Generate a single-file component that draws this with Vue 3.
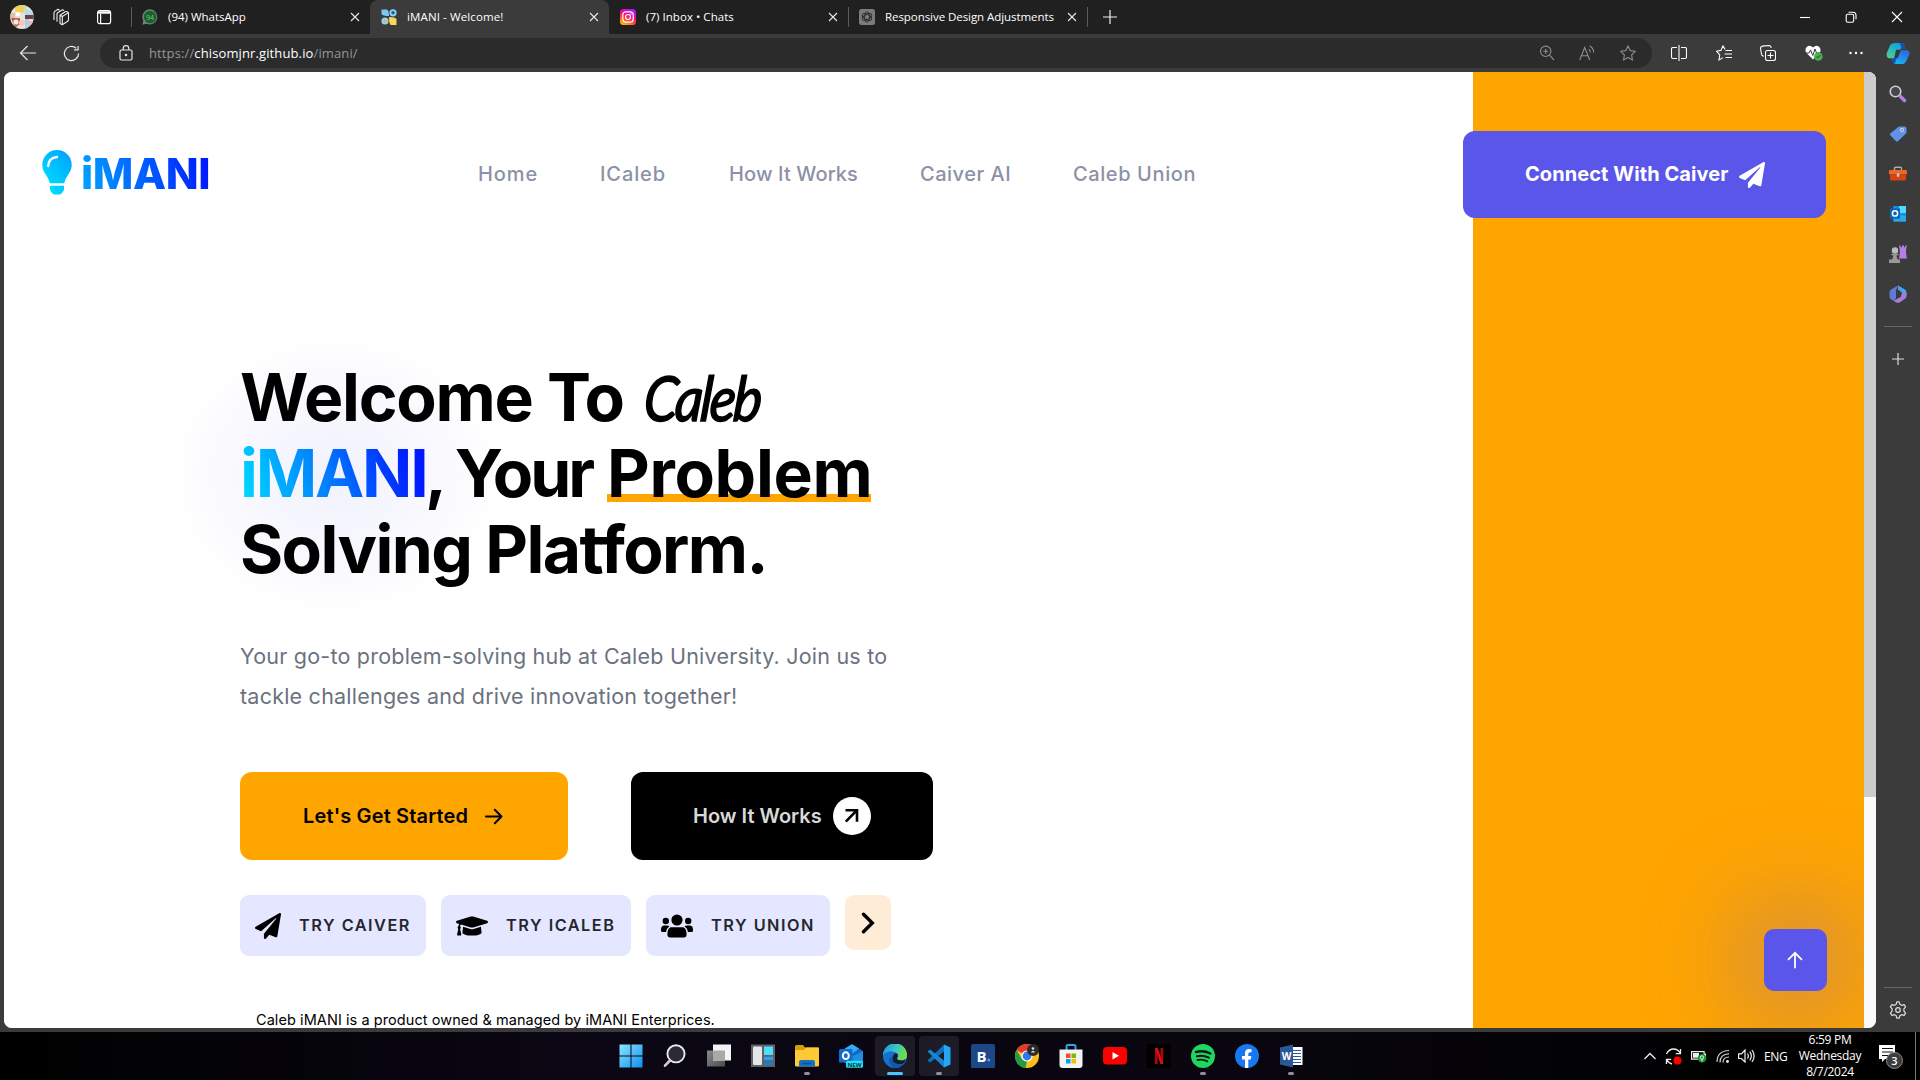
<script setup>
const tabs = [
  { id: 'wa', title: '(94) WhatsApp', ls: 0 },
  { id: 'im', title: 'iMANI - Welcome!', active: true, ls: 0.12 },
  { id: 'ig', title: '(7) Inbox • Chats', ls: 0.04 },
  { id: 'ai', title: 'Responsive Design Adjustments', ls: -0.06 },
]
const links = [
  { label: 'Home', w: 60, ls: 0.9 },
  { label: 'ICaleb', w: 67, ls: 0.9 },
  { label: 'How It Works', w: 129, ls: 0.12 },
  { label: 'Caiver AI', w: 91, ls: 0.5 },
  { label: 'Caleb Union', w: 123, ls: 0.6 },
]
const plane =
  'M476 3.2L12.5 270.6c-18.1 10.4-15.8 35.6 2.2 43.2L121 358.4l287.3-253.2c5.5-4.9 13.3 2.6 8.6 8.3L176 407v80.5c0 23.6 28.5 32.9 42.5 15.8L282 426l124.6 52.2c14.2 6 30.4-2.9 33-18.2l72-432C515 7.8 493.3-6.8 476 3.2z'
const cap =
  'M622.34 153.2L343.4 67.5c-15.2-4.67-31.6-4.67-46.79 0L17.66 153.2c-23.54 7.23-23.54 38.36 0 45.59l48.63 14.94c-10.67 13.19-17.23 29.28-17.88 46.9C38.78 266.15 32 276.11 32 288c0 10.78 5.68 19.85 13.86 25.65L20.33 428.53C18.11 438.52 25.71 448 35.94 448h56.11c10.24 0 17.84-9.48 15.62-19.47L82.14 313.65C90.32 307.85 96 298.78 96 288c0-11.57-6.47-21.25-15.66-26.87.76-15.02 8.44-28.3 20.69-36.72L296.6 284.5c9.06 2.78 26.44 6.25 46.79 0l278.95-85.7c23.55-7.24 23.55-38.36 0-45.6zM352.79 315.09c-28.53 8.76-52.84 3.92-65.59 0l-145.02-44.55L128 384c0 35.35 85.96 64 192 64s192-28.65 192-64l-14.18-113.47-145.03 44.56z'
const apps = [
  'win', 'search', 'task', 'widgets', 'files', 'outlook', 'edge', 'code',
  'booking', 'chrome', 'store', 'youtube', 'netflix', 'spotify', 'facebook', 'word',
]
const running = ['files', 'code', 'spotify', 'word']
</script>

<template>
  <div class="screen">
    <!-- Tab strip -->
    <header class="tabstrip">
      <svg class="avatar" viewBox="0 0 24 28">
        <defs><clipPath id="av"><ellipse cx="12" cy="14" rx="11.8" ry="12" /></clipPath></defs>
        <g clip-path="url(#av)">
          <rect width="24" height="28" fill="#e9e2dc" />
          <path d="M3 2h14l-2 7-8 2z" fill="#e8d25a" />
          <path d="M14 4l9 5v8l-8-2z" fill="#b9dbe8" />
          <path d="M0 10h5v6H0z" fill="#e6b9a8" />
          <rect x="15" y="12" width="9" height="4" fill="#6b3f45" />
          <rect x="15" y="16" width="4" height="11" fill="#a8d4de" />
          <path d="M1 15h9v6l-5 4z" fill="#b5674a" />
          <circle cx="6" cy="19" r="2.6" fill="#fbe9e0" />
          <circle cx="12" cy="20" r="3" fill="#f6c6bd" />
          <path d="M19 18h5v8h-5z" fill="#f0b3c0" />
          <circle cx="8" cy="11" r="2.2" fill="#fff" />
        </g>
      </svg>
      <svg class="ws" viewBox="0 0 18 18" fill="none" stroke="#eee" stroke-width="1.1" stroke-linejoin="round">
        <path d="M8 7.200l5.200-3.400q1-.6 2 0l1.300.8v7.200q0 1-.8 1.500L10.300 16.700 8 15.400zM8 7.200l2.300 1.300 6.200-3.900M10.300 8.500v8M5 13.800V6q0-.8.7-1.300L10.500 1.700l1.600.9M2 12V4.700q0-.8.7-1.300L6 1.300l1.600.9" />
      </svg>
      <svg class="panel" viewBox="0 0 16 16" fill="none" stroke="#fff" stroke-width="1.2">
        <rect x="1.600" y="1.600" width="13" height="13" rx="2.200" />
        <path d="M2 3.500h12" stroke-width="2.400" /><path d="M4.600 5v9.500" />
      </svg>
      <i class="sep first"></i>
      <div v-for="(t, i) in tabs" :key="t.id" class="tab" :class="{ active: t.active, divided: i === 3 }">
        <svg v-if="t.id === 'wa'" class="fav" viewBox="0 0 16 16">
          <path d="M8 .3a7.600 7.600 0 1 1-3.500 14.500L.4 15.700l.9-4.100A7.600 7.600 0 0 1 8 .3z" fill="#77807a" />
          <circle cx="8.100" cy="8" r="6.300" fill="#14652b" />
          <text x="8" y="10.600" font-size="7" text-anchor="middle" fill="#8fb79b">94</text>
        </svg>
        <svg v-else-if="t.id === 'im'" class="fav" viewBox="0 0 16 16">
          <path d="M.5.500h5.500q2 1 2 6.500-6 0-7.500-2z" fill="#7cc9f7" />
          <path d="M8 8q6 0 7.500 2v6H10q-2-1-2-8z" fill="#fbd65b" />
          <circle cx="12" cy="3.800" r="3.600" fill="#8fd2f4" /><circle cx="4" cy="12" r="3.600" fill="#8fd2f4" />
          <circle cx="12" cy="3.800" r="1.700" fill="#1f5f86" /><circle cx="4" cy="12" r="1.700" fill="#d7b95a" />
        </svg>
        <svg v-else-if="t.id === 'ig'" class="fav" viewBox="0 0 16 16">
          <defs>
            <linearGradient id="ig" x1=".2" y1="1" x2=".7" y2="0">
              <stop offset="0" stop-color="#ffc400" /><stop offset=".35" stop-color="#ff4a2a" />
              <stop offset=".65" stop-color="#f0079c" /><stop offset="1" stop-color="#a21bff" />
            </linearGradient>
          </defs>
          <rect width="16" height="16" rx="3.500" fill="url(#ig)" />
          <rect x="2.800" y="2.800" width="10.400" height="10.400" rx="3" fill="none" stroke="#fff" stroke-width="1.200" />
          <circle cx="8" cy="8" r="2.500" fill="none" stroke="#fff" stroke-width="1.200" /><circle cx="11" cy="5" r=".7" fill="#fff" />
        </svg>
        <svg v-else class="fav" viewBox="0 0 16 16">
          <rect width="16" height="16" rx="2.500" fill="#7b7b7b" />
          <g fill="none" stroke="#2e2e2e" stroke-width=".9">
            <ellipse cx="8" cy="8" rx="2.600" ry="5.200" /><ellipse cx="8" cy="8" rx="2.600" ry="5.200" transform="rotate(60 8 8)" />
            <ellipse cx="8" cy="8" rx="2.600" ry="5.200" transform="rotate(120 8 8)" />
          </g>
        </svg>
        <span class="title" :style="{ letterSpacing: t.ls + 'px' }">{{ t.title }}</span>
        <svg class="x" viewBox="0 0 10 10" stroke="#e8e8e8" stroke-width="1.100"><path d="M1 1l8 8M9 1L1 9" /></svg>
      </div>
      <i class="sep"></i>
      <svg class="newtab" viewBox="0 0 14 14" stroke="#eee" stroke-width="1.200"><path d="M7 0v14M0 7h14" /></svg>
      <div class="wincontrols">
        <svg viewBox="0 0 12 12" fill="none" stroke="#fff" stroke-width="1.100"><path d="M1 6.500h10" /></svg>
        <svg viewBox="0 0 12 12" fill="none" stroke="#fff" stroke-width="1.100">
          <rect x="1.200" y="3.200" width="7.500" height="8" rx="1.500" /><path d="M3.500 1.200h4.500q3 0 3 3v4" />
        </svg>
        <svg viewBox="0 0 12 12" stroke="#fff" stroke-width="1.100"><path d="M1 1l10 10M11 1L1 11" /></svg>
      </div>
    </header>

    <!-- Address bar -->
    <div class="toolbar">
      <svg class="back" viewBox="0 0 18 16" fill="none" stroke="#e6e6e6" stroke-width="1.200"><path d="M17 8H1.500M8.500 1l-7 7 7 7" /></svg>
      <svg class="reload" viewBox="0 0 18 18" fill="none" stroke="#e6e6e6" stroke-width="1.300"><path d="M16.500 9a7.500 7.500 0 1 1-2.500-5.600M16 1v4.200h-4.300" /></svg>
      <div class="omnibox">
        <svg class="lock" viewBox="0 0 14 16" fill="none" stroke="#e6e6e6" stroke-width="1.200">
          <rect x="1" y="5" width="12" height="10" rx="1.500" /><path d="M4.200 5V3.500a2.800 2.800 0 0 1 5.600 0V5" /><circle cx="7" cy="10" r=".7" fill="#e6e6e6" />
        </svg>
        <span class="url">https://<b>chisomjnr.github.io</b>/imani/</span>
        <svg class="oi" viewBox="0 0 16 16" fill="none" stroke="#8f8f8f" stroke-width="1.100"><circle cx="6.700" cy="6.300" r="5.200" /><path d="M10.500 10.200L15 15M6.700 3.700v5.200M4.100 6.300h5.200" /></svg>
        <svg class="oi" viewBox="0 0 16 16" fill="none" stroke="#8f8f8f" stroke-width="1.100"><path d="M.7 15L5.700 2.500 10.700 15M2.500 10.800h6.500M9.800 4.200q1.600 1.300 1.500 3.300M10.600 1q4.300 2.200 4 6.500" /></svg>
        <svg class="oi" viewBox="0 0 16 16" fill="none" stroke="#8f8f8f" stroke-width="1.100"><path d="M8 .9l2.200 4.700 5.100.7-3.700 3.600.9 5.200L8 12.600l-4.500 2.500.9-5.200L.7 6.300l5.100-.7z" stroke-linejoin="round" /></svg>
      </div>
      <div class="actions">
        <svg viewBox="0 0 16 16" fill="none" stroke="#fff" stroke-width="1.100"><path d="M6 2.500H2q-1.500 0-1.500 1.500v8q0 1.500 1.500 1.500h4M10 2.500h4q1.500 0 1.500 1.500v8q0 1.500-1.500 1.500h-4M8 0v16" /></svg>
        <svg viewBox="0 0 16 16" fill="none" stroke="#fff" stroke-width="1.100" stroke-linejoin="round"><path d="M9 4.500L7 .8 5 5.400l-4.600.8 3.400 3.600-.9 5.300L7 12.600M9.500 5.500H16M8.500 9H16M9.500 12.500H16" /></svg>
        <svg viewBox="0 0 16 16" fill="none" stroke="#fff" stroke-width="1.100"><rect x="5.500" y="5.500" width="10" height="10" rx="2" /><path d="M10.500 7.500v6M7.500 10.500h6M3.500 11.500L1.700 10 .5 3.500q0-2 2-2.400L9 .5q2 0 2.200 2.500" /></svg>
        <svg class="heart" viewBox="0 0 18 16"><path d="M8 14.500L1 7.500Q-.5 4 2 1.700q3-2 6 .8 3-2.800 6-.8 2.500 2.300 1 5.800z" fill="#fff" /><path d="M0 8h4l1.500-3 2.300 5.500L10 4l1.500 4H16" fill="none" stroke="#3b3b3b" /><circle cx="13.300" cy="11.500" r="4.300" fill="#4caf50" /><path d="M11.400 11.600l1.300 1.300 2.500-2.700" fill="none" stroke="#17451a" /></svg>
        <svg viewBox="0 0 16 16" fill="#fff"><circle cx="2.500" cy="8" r="1.200" /><circle cx="8" cy="8" r="1.200" /><circle cx="13.500" cy="8" r="1.200" /></svg>
        <svg class="copilot" viewBox="0 0 24 24">
          <defs>
            <linearGradient id="cpa" x1="0" y1="1" x2=".5" y2="0"><stop offset="0" stop-color="#5ad08a" /><stop offset="1" stop-color="#0aa5dd" /></linearGradient>
            <linearGradient id="cpb" x1="0" y1="1" x2=".5" y2="0"><stop offset="0" stop-color="#0fc0f5" /><stop offset="1" stop-color="#2e6be6" /></linearGradient>
          </defs>
          <path d="M9 1h7q2 0 2.800 3l.7 2.500H15L10 17H4Q-1 17 .5 11L3.500 4Q5 1 9 1z" fill="url(#cpa)" />
          <path d="M5.500 17H10l5-8.500h7q3 1 1.500 5.500L20.500 20q-1.300 3-5 3H9.500q-2 0-2.700-2z" fill="url(#cpb)" />
          <path d="M14 1h2q2 0 2.800 3l.7 2.500h-4z" fill="#154fb0" /><path d="M5.500 17H10l-1 5.500q-1.700 0-2.400-2z" fill="#1a46c4" />
          <path d="M10 8h5l-3.200 9H8z" fill="#343b43" />
        </svg>
      </div>
    </div>

    <div class="middle">
      <!-- Web page -->
      <main class="page">
        <div class="stage">
          <div class="content">
            <nav class="nav">
              <div class="logo">
                <svg class="bulb" viewBox="0 0 30 46">
                  <defs><linearGradient id="bl" x1="0" y1="1" x2=".8" y2="0"><stop offset="0" stop-color="#00eaff" /><stop offset="1" stop-color="#00a4ff" /></linearGradient></defs>
                  <path d="M15 0a15 15 0 0 1 15 15.300c0 5-2.300 8-4.300 11-1.700 2.700-2.700 4.600-3.200 7.700H7.500C7 31 6 29 4.300 26.300 2.300 23.300 0 20.300 0 15.300A15 15 0 0 1 15 0zM7.800 36.500h14.400v3q0 2-1.300 3.200l-1.300 1.700q-.8 1.100-2 1.100h-5.200q-1.200 0-2-1.100l-1.300-1.700q-1.300-1.200-1.300-3.200z" fill="url(#bl)" />
                  <path d="M6 16.500q.5-8.500 9-9.300" fill="none" stroke="#fff" stroke-width="2.400" stroke-linecap="round" />
                </svg>
                <span class="brand">iMANI</span>
              </div>
              <ul class="links">
                <li v-for="l in links" :key="l.label" :style="{ width: l.w + 'px', letterSpacing: l.ls + 'px' }">{{ l.label }}</li>
              </ul>
              <a class="connect">
                <span>Connect With Caiver</span>
                <svg viewBox="0 0 512 512" fill="#fff"><path :d="plane" /></svg>
              </a>
            </nav>

            <section class="hero">
              <h1>
                <span class="line"><span class="w1">Welcome To</span><em class="script">Caleb</em></span>
                <span class="line"><span class="grad">iMANI</span><span class="w2">, Your</span><span class="under">Problem</span></span>
                <span class="line w3">Solving Platform.</span>
              </h1>
              <p class="lead"><span>Your go-to problem-solving hub at Caleb University. Join us to</span><span>tackle challenges and drive innovation together!</span></p>
              <div class="ctas">
                <a class="cta start"><span>Let's Get Started</span>
                  <svg viewBox="0 0 18 16" fill="none" stroke="#000" stroke-width="2" stroke-linecap="round" stroke-linejoin="round"><path d="M1 8h15.500M9.800 1.300L16.500 8l-6.700 6.700" /></svg>
                </a>
                <a class="cta works"><span>How It Works</span>
                  <svg viewBox="0 0 38 38"><circle cx="19" cy="19" r="19" fill="#fff" /><path d="M12.500 13.200H24v11.500M24 13.200L12.800 24.700" fill="none" stroke="#000" stroke-width="2.600" /></svg>
                </a>
              </div>
              <div class="chips">
                <div class="chip c1"><svg viewBox="0 0 512 512"><path :d="plane" /></svg><span>TRY CAIVER</span></div>
                <div class="chip c2"><svg viewBox="0 0 640 512"><path :d="cap" /></svg><span>TRY ICALEB</span></div>
                <div class="chip c3">
                  <svg viewBox="0 0 32 24"><circle cx="16" cy="6" r="5.600" /><circle cx="4.800" cy="7" r="3.200" /><circle cx="27.200" cy="7" r="3.200" /><path d="M9.600 13.200h12.800q3.200 1.600 3.200 7v.8q0 2.400-2.400 2.400H8.800q-2.400 0-2.400-2.400v-.8q0-5.400 3.200-7zM0 15.500Q0 11.500 3.500 11.500h2.700q1.300 0 2.200.8-3 2.400-3.400 5.700H1.500Q0 18 0 16.500zM32 15.500q0-4-3.500-4h-2.700q-1.300 0-2.200.8 3 2.400 3.400 5.700h3.500q1.500 0 1.500-1.500z" /></svg>
                  <span>TRY UNION</span>
                </div>
                <div class="more"><svg viewBox="0 0 14 22" fill="none" stroke="#000" stroke-width="3.400" stroke-linecap="round"><path d="M2.500 2.200L11.300 11l-8.800 8.800" /></svg></div>
              </div>
              <p class="legal">Caleb iMANI is a product owned &amp; managed by iMANI Enterprices.</p>
            </section>
          </div>
          <a class="totop"><svg viewBox="0 0 16 18" fill="none" stroke="#fff" stroke-width="1.800" stroke-linecap="round"><path d="M8 16.500V2M1.500 8.300L8 1.800l6.500 6.500" /></svg></a>
        </div>
        <div class="scrollbar"><i></i></div>
      </main>

      <!-- Edge sidebar -->
      <aside class="sidebar">
        <svg viewBox="0 0 18 18"><circle cx="6.500" cy="6.500" r="5.300" fill="#44484e" stroke="#cfcfcf" stroke-width="1.600" /><path d="M11.500 11.500l4 4" stroke="#b77de6" stroke-width="3.500" stroke-linecap="round" /></svg>
        <svg viewBox="0 0 18 18"><path d="M10 1.500h5.500q2 0 2 2V8L9.200 16q-1.200 1-2.400 0L1.500 10.500q-1-1.200 0-2.300z" fill="#5f93e6" /><circle cx="13" cy="5" r="1.900" fill="#d6e4fa" /><circle cx="13" cy="5" r=".8" fill="#333" /></svg>
        <svg viewBox="0 0 18 18"><path d="M5.500 5V3.300q0-1 1-1h5q1 0 1 1V5" fill="none" stroke="#aaa" stroke-width="1.400" /><rect y="5" width="18" height="4.500" rx="1.200" fill="#f0652a" /><path d="M1 9.500h16V14q0 1.500-1.500 1.500h-13Q1 15.500 1 14z" fill="#d8430f" /><rect x="7.800" y="8" width="2.600" height="4" rx="1.200" fill="#c4c4c4" /></svg>
        <svg viewBox="0 0 18 18"><rect x="4" y="1" width="13" height="15.500" rx="1" fill="#1490df" /><path d="M10 1h7v7h-7z" fill="#50d9ff" /><path d="M4 9l13 2v5.500H5z" fill="#28a8ea" /><rect x="1" y="3.200" width="10" height="10.500" rx="1" fill="#0a64b8" /><circle cx="6" cy="8.400" r="2.600" fill="none" stroke="#fff" stroke-width="1.500" /></svg>
        <svg viewBox="0 0 18 18"><path d="M10 .5h1.700v1.700h1.300V.5h2v1.700h1.300V.5H18l-1 4.500q0 5 1 8.500h-8q1-4.500.8-8.500z" fill="#b77de6" /><circle cx="6" cy="5.500" r="3.200" fill="#bbb" /><path d="M2.500 8.700h7v1.500h-2q0 3 1.500 4.300h2V18H0v-3.500h2.800q1.500-1.300 1.500-4.300h-2z" fill="#999" /></svg>
        <svg viewBox="0 0 18 18"><path d="M9 .5l7 4q1.500 1 1.500 3v3L13 8 9 5.500v-5z" fill="#47a5ee" /><path d="M17.500 8v3q0 1.700-1.500 2.700l-5 3.500q-2 1-4 0l-2.500-1.500 7.500-4V8z" fill="#a57cda" /><path d="M9 .5L2 4.500Q.5 5.500.5 7.500v4q0 1.500 1.500 2.700L5 16l2-3V5.500z" fill="#6078d8" /><path d="M7 6.500l3-1.500 3 3-1 3-5 2z" fill="#3b3b3b" /></svg>
        <hr />
        <svg class="add" viewBox="0 0 14 14" stroke="#ddd" stroke-width="1.200"><path d="M7 1v12M1 7h12" /></svg>
        <span class="grow"></span>
        <hr class="low" />
        <svg class="gear" viewBox="0 0 18 18" fill="none" stroke="#ddd" stroke-width="1.200" stroke-linejoin="round"><circle cx="9" cy="9" r="2.300" /><path d="M7.200 3.300L7.800.8h2.400l.6 2.500 1.800 1 2.500-.7 1.500 2.300-1.700 2v2.200l1.700 2-1.500 2.300-2.500-.7-1.800 1-.6 2.500H7.800l-.6-2.500-1.800-1-2.500.7-1.500-2.300 1.700-2V7.900l-1.700-2 1.500-2.300 2.500.7z" /></svg>
      </aside>
    </div>

    <!-- Taskbar -->
    <footer class="taskbar">
      <div class="apps">
        <div v-for="a in apps" :key="a" class="app" :class="{ lit: a === 'edge' || a === 'code' }">
          <svg v-if="a === 'win'" viewBox="0 0 24 24"><defs><linearGradient id="wn" x2="1" y2="1"><stop stop-color="#8be6ff" /><stop offset="1" stop-color="#108eee" /></linearGradient></defs><path d="M.5.500H11.500V11.500H.5zM12.500.500H23.500V11.500H12.500zM.5 12.500H11.500V23.500H.5zM12.500 12.500H23.500V23.500H12.500z" fill="url(#wn)" /></svg>
          <svg v-else-if="a === 'search'" viewBox="0 0 24 24"><circle cx="13" cy="9.800" r="8.600" fill="#2a2b33" stroke="#e9e9e9" stroke-width="1.900" /><path d="M7 16.500L2 21.700" stroke="#d0d0d0" stroke-width="2.600" stroke-linecap="round" /></svg>
          <svg v-else-if="a === 'task'" viewBox="0 0 24 24"><defs><linearGradient id="tv" x2="1" y2="1"><stop stop-color="#8a8a8a" /><stop offset="1" stop-color="#4c4c4c" /></linearGradient></defs><rect y="6.500" width="18" height="16" fill="url(#tv)" /><rect x="6" y=".5" width="18" height="16" fill="#f4f4f4" /><path d="M6 6.500h12v10H6z" fill="#a9a9a9" /></svg>
          <svg v-else-if="a === 'widgets'" viewBox="0 0 24 24"><rect y=".5" width="24" height="22.500" fill="#626262" /><rect x="2" y="2.500" width="9" height="18.500" rx="1" fill="#e4e6ea" /><rect x="13" y="2.500" width="9" height="8.500" rx=".6" fill="#4be0ff" /><rect x="13" y="12.700" width="9" height="3.500" fill="#2ba2e5" /><rect x="13" y="17.600" width="9" height="3.500" fill="#1380cf" /></svg>
          <svg v-else-if="a === 'files'" viewBox="0 0 24 24"><path d="M0 2.500Q0 1 1.500 1h6.500l2 2.500h12.500q1.500 0 1.500 1.500v8H0z" fill="#d79b0b" /><path d="M0 6h9l2-2.500h13V21.500q0 1-1.500 1h-21Q0 22.500 0 21.500z" fill="#fdc935" /><path d="M4 22.500v-4.500q0-2 2-2h12q2 0 2 2v4.500z" fill="#1372c8" /><path d="M7.500 19.500h9" stroke="#0b4f93" stroke-width="1.500" /></svg>
          <svg v-else-if="a === 'outlook'" viewBox="0 0 24 24"><path d="M3 6l10-5.800L24 7v12H5z" fill="#1764c4" /><path d="M13 .2l7 4.300-9 7-5-7z" fill="#2fb0f5" /><path d="M12 13L24 7v12H12z" fill="#1b8fe6" /><rect y="5" width="13.500" height="13.500" rx="1.500" fill="#0f6cce" /><ellipse cx="6.800" cy="11.700" rx="3" ry="3.400" fill="none" stroke="#fff" stroke-width="2" /><rect x="7" y="16.700" width="17" height="7" rx="1.500" fill="#27e0ee" /><text x="15.500" y="22.500" text-anchor="middle" font-size="6" font-weight="700" fill="#053b52">NEW</text></svg>
          <svg v-else-if="a === 'edge'" viewBox="0 0 24 24"><defs><linearGradient id="eg" x2="1" y2=".4"><stop stop-color="#1a8fdf" /><stop offset=".55" stop-color="#36c6c8" /><stop offset="1" stop-color="#6fdc4a" /></linearGradient></defs><circle cx="12" cy="12" r="12" fill="#1670cd" /><path d="M0 11.500A12 12 0 0 1 24 11q.2 5-5.500 5.500-4.500 0-4.500-2.200 1.500-2 .2-4.500Q12 7 8 7.200 2 7.700 0 11.500z" fill="url(#eg)" /><path d="M14 14.300q0 2.200 4.500 2.200 2.500 0 4-1.500l-1 3.500q-3 2.700-7.500 1.500Q9 18.500 9.500 13.500q.4-3.500 3.500-4.500 3.500 1.500 1 5.300z" fill="#141c30" /><path d="M9.500 13.500Q9 18.500 14 20q4.500 1.200 7.500-1.500-3.500 5.500-9.500 5.500-6-2-6-8 .2-3.500 3.500-2.500z" fill="#1258a8" /></svg>
          <svg v-else-if="a === 'code'" viewBox="0 0 24 24"><path d="M17 .5l6.500 3v17l-6.500 3z" fill="#25a5f2" /><path d="M17 .5v7L3 18.500l-2.500-2z" fill="#0b73bd" /><path d="M17 23.500v-7L3 5.500l-2.500 2z" fill="#1488d2" /></svg>
          <svg v-else-if="a === 'booking'" viewBox="0 0 24 24"><rect width="24" height="24" rx="1.500" fill="#1c4685" /><text x="5.500" y="17.500" font-size="15" font-weight="700" fill="#fff">B</text><circle cx="17.800" cy="16" r="1.500" fill="#26b5f0" /></svg>
          <svg v-else-if="a === 'chrome'" viewBox="0 0 24 24"><circle cx="12" cy="12" r="12" fill="#fbc116" /><path d="M12 12L1.600 6A12 12 0 0 1 22.400 6z" fill="#e33b2e" /><path d="M12 0a12 12 0 0 1 10.400 6H12z" fill="#e33b2e" /><path d="M1.600 6L7 15.300 12 17l-1.500 7A12 12 0 0 1 1.600 6z" fill="#229a48" /><circle cx="12" cy="12" r="5.600" fill="#fff" /><circle cx="12" cy="12" r="4.400" fill="#3079ec" /><circle cx="18" cy="6" r="6" fill="#2b2b2b" /><circle cx="18" cy="4.500" r="1.300" fill="#ddd" /><path d="M15.800 8.500q2.200-3.500 4.400 0z" fill="#ddd" /></svg>
          <svg v-else-if="a === 'store'" viewBox="0 0 24 24"><path d="M7.500 6V2.500q0-1.500 1.500-1.500h6q1.500 0 1.500 1.500V6" fill="none" stroke="#28a8ea" stroke-width="2" /><path d="M.5 5.500h23V21q0 3-3 3h-17q-3 0-3-3z" fill="#f3f3f3" /><path d="M7 9.500h4.500V14H7z" fill="#f25022" /><path d="M12.500 9.500H17V14h-4.500z" fill="#7fba00" /><path d="M7 15h4.500v4.500H7z" fill="#00a4ef" /><path d="M12.500 15H17v4.500h-4.500z" fill="#ffb900" /></svg>
          <svg v-else-if="a === 'youtube'" viewBox="0 0 24 24"><rect y="3" width="24" height="17.500" rx="4" fill="#f00" /><path d="M9.500 8l6.500 3.800-6.500 3.700z" fill="#fff" /></svg>
          <svg v-else-if="a === 'netflix'" viewBox="0 0 24 24"><rect width="24" height="24" fill="#000" /><path d="M8 4h2.700v16H8zM13.500 4h2.700v16h-2.700z" fill="#a80710" /><path d="M8 4h2.700l5.500 16h-2.700z" fill="#e50914" /></svg>
          <svg v-else-if="a === 'spotify'" viewBox="0 0 24 24"><circle cx="12" cy="12" r="12" fill="#1ed760" /><g fill="none" stroke="#0c1712" stroke-linecap="round"><path d="M5 8q7.500-2 14.300 1.500" stroke-width="2.500" /><path d="M5.800 12.200q6.500-1.500 12 1.500" stroke-width="2.100" /><path d="M6.500 16q5-1.200 9.800 1.300" stroke-width="1.800" /></g></svg>
          <svg v-else-if="a === 'facebook'" viewBox="0 0 24 24"><circle cx="12" cy="12" r="12" fill="#1977f3" /><path d="M10 24v-8.500H7V12h3V9.400Q10 5 14.200 5q1.200 0 2.300.2v3h-1.400q-1.800 0-1.800 1.700V12h3l-.5 3.500h-2.500V24z" fill="#fff" /></svg>
          <svg v-else viewBox="0 0 24 24"><rect x="11" y="3" width="12.500" height="18" fill="#fff" /><path d="M14 6.500h8M14 9.500h8M14 12.500h8M14 15.500h8M14 18.500h8" stroke="#2b5797" stroke-width="1.200" /><path d="M1 3.500L14 .5v23l-13-3z" fill="#2b5797" /><text x="7.500" y="16" text-anchor="middle" font-size="10" font-weight="700" fill="#fff">W</text></svg>
          <i v-if="a === 'edge'" class="mark wide"></i>
          <i v-else-if="running.includes(a)" class="mark"></i>
        </div>
      </div>
      <div class="tray">
        <svg class="chev" viewBox="0 0 12 8" fill="none" stroke="#eee" stroke-width="1.300"><path d="M.5 7L6 1.500 11.500 7" /></svg>
        <svg class="sync" viewBox="0 0 17 17" fill="none" stroke="#eee" stroke-width="1.300"><path d="M1.500 6Q4 1 8.500 1t7 4.500M15.500 1v4.700h-4.700M1.500 16v-4.700h4.700M2 12q2 3.500 5 4" /><circle cx="12.500" cy="12.500" r="4" fill="#f00" stroke="none" /></svg>
        <svg class="batt" viewBox="0 0 16 14"><path d="M.6 2.600h12.500v7.500H.6z" fill="none" stroke="#eee" stroke-width="1.200" /><path d="M2 4h6v4.700H2zM13.500 4.500H15V8h-1.500z" fill="#eee" /><circle cx="11" cy="9.200" r="4.300" fill="#15922d" /><circle cx="11" cy="8.500" r="1.700" fill="none" stroke="#e8ffe8" /><path d="M11 10v2.500" stroke="#e8ffe8" /></svg>
        <svg class="wifi" viewBox="0 0 14 14" fill="none" stroke="#ccc" stroke-width="1.200"><path d="M1 13Q1 2 13 1.500M4 13.500Q4 5 13 4.800M7 13.500Q7 8 13 8" /><circle cx="11.500" cy="12.500" r="1.400" fill="#eee" stroke="none" /></svg>
        <svg class="vol" viewBox="0 0 17 14" fill="none" stroke="#eee" stroke-width="1.200"><path d="M.6 4.800h2.800L7 1v12L3.400 9.500H.6zM9.500 4.500q1.700 2.500 0 5M11.800 2.700q3 4.300 0 8.600M14 1q4.200 6 0 12" /></svg>
        <span class="lang">ENG</span>
        <div class="clock"><span>6:59 PM</span><span>Wednesday</span><span>8/7/2024</span></div>
        <svg class="note" viewBox="0 0 25 25"><path d="M0 1h16v14H6l-3 3v-3H0z" fill="#fff" /><path d="M3 4.500h11M3 8h11M3 11.500h7" stroke="#111" stroke-width="1.200" /><circle cx="15.500" cy="16.500" r="8" fill="#3c3c3c" stroke="#8a8a8a" /><text x="15.500" y="20.500" text-anchor="middle" font-size="11" font-weight="600" fill="#fff">3</text></svg>
        <i class="peek"></i>
      </div>
    </footer>
  </div>
</template>

<style>
html, body { margin: 0; overflow: hidden; background: #3b3b3b; }
</style>

<style scoped>
* { box-sizing: border-box; }
.screen { width: 1920px; height: 1080px; display: flex; flex-direction: column; overflow: hidden; background: #3b3b3b; font-family: "Open Sans", "Noto Sans", sans-serif; color: #fff; }
svg { display: block; flex: none; }
span { white-space: nowrap; }

.tabstrip { height: 34px; flex: none; display: flex; align-items: center; background: #202020; padding-left: 9.500px; }
.avatar { width: 24px; height: 28px; }
.ws { width: 18px; height: 18px; margin-left: 18.500px; }
.panel { width: 16px; height: 16px; margin-left: 26px; }
.sep { width: 1px; height: 20px; background: #5c5c5c; flex: none; }
.sep.first { margin-left: 19px; margin-right: -1px; }
.tab { width: 239px; height: 34px; flex: none; display: flex; align-items: center; padding-left: 11px; position: relative; }
.tab.active { background: #3b3b3b; border-radius: 8px 8px 0 0; }
.tab.divided::before { content: ""; position: absolute; left: 0; top: 7px; width: 1px; height: 20px; background: #5c5c5c; }
.fav { width: 16px; height: 16px; }
.title { margin-left: 10px; width: 182px; font-size: 11.500px; line-height: 16px; }
.x { width: 10px; height: 10px; }
.newtab { width: 14px; height: 14px; margin-left: 15px; }
.wincontrols { margin-left: auto; display: flex; gap: 34px; padding-right: 17px; }
.wincontrols svg { width: 12px; height: 12px; }

.toolbar { height: 38px; flex: none; display: flex; align-items: center; padding-left: 19px; }
.back { width: 18px; height: 16px; }
.reload { width: 17px; height: 17px; margin-left: 26px; }
.omnibox { width: 1552px; height: 30px; flex: none; margin-left: 20px; border-radius: 15px; background: #2b2b2b; display: flex; align-items: center; padding-left: 19px; }
.lock { width: 14px; height: 16px; margin-top: -1px; }
.url { margin-left: 16px; width: 1390px; flex: none; font-size: 13px; line-height: 18px; color: #969696; letter-spacing: 0.12px; }
.url b { font-weight: 400; color: #fff; }
.oi { width: 16px; height: 16px; margin-right: 24.300px; }
.actions { margin-left: 19px; display: flex; align-items: center; gap: 28.500px; }
.actions svg { width: 16px; height: 16px; }
.actions .heart { width: 18px; margin-right: -3px; }
.actions .copilot { width: 24px; height: 23px; margin-left: -7px; }

.middle { height: 960px; flex: none; display: flex; padding: 0 0 4px 4px; }
.page { width: 1872px; height: 956px; flex: none; display: flex; overflow: hidden; border-radius: 8px; background: #fff; font-family: Inter, "Liberation Sans", sans-serif; color: #000; }
.stage { width: 1860px; height: 956px; position: relative; overflow: hidden; background: linear-gradient(90deg, #fff 1469px, #ffa500 1469px); }
.scrollbar { width: 12px; background: #fafafa; }
.scrollbar i { display: block; height: 725px; background: #ccc; }
.content { position: relative; }

.nav { height: 87px; margin-top: 59px; padding-left: 38px; display: flex; align-items: center; }
.logo { width: 436px; height: 87px; display: flex; align-items: center; }
.bulb { width: 30px; height: 45px; margin-top: -4px; }
.brand { margin: -4px 0 0 9px; font-weight: 800; font-size: 43px; line-height: 50px; letter-spacing: -0.400px; background: linear-gradient(75deg, #00a8ff, #0019ff 95%); -webkit-background-clip: text; background-clip: text; color: transparent; }
.links { margin: -2px 0 0; padding: 0; list-style: none; width: 985px; display: flex; gap: 62px; font-weight: 500; font-size: 20px; line-height: 30px; color: #8d91a7; white-space: nowrap; }
.connect { width: 363px; height: 87px; border-radius: 12px; background: #5956e9; color: #fff; display: flex; align-items: center; padding-left: 62px; font-size: 20px; font-weight: 700; letter-spacing: 0.08px; }
.connect span { width: 214px; margin-top: -2px; }
.connect svg { width: 26px; height: 26px; }

.hero { padding-left: 236px; }
h1 { position: relative; margin: 141px 0 0; font-size: 66px; font-weight: 700; line-height: 76px; font-variant-ligatures: none; font-feature-settings: "calt" 0; }
h1::before { content: ""; position: absolute; left: -70px; top: -24px; width: 330px; height: 280px; background: radial-gradient(closest-side, rgba(89, 86, 233, .08), rgba(89, 86, 233, .05) 45%, rgba(89, 86, 233, .01) 88%, transparent); }
.line { position: relative; display: flex; height: 76px; }
.w1 { width: 403px; letter-spacing: -1.250px; }
.script { font-family: Lato, sans-serif; font-weight: 400; font-size: 62px; -webkit-text-stroke: 1.500px #000; letter-spacing: -3px; transform: scaleX(.88) skewX(-5deg); transform-origin: 0 75%; }
.grad { width: 185px; letter-spacing: -2.200px; background: linear-gradient(70deg, #00e1ff, #0080ff 45%, #0019ff 90%); -webkit-background-clip: text; background-clip: text; color: transparent; }
.w2 { width: 182px; letter-spacing: -3px; }
.under { width: 264px; height: 76px; letter-spacing: -0.300px; background: linear-gradient(#ffa500, #ffa500) 0 59px / 264px 8px no-repeat; }
.w3 { letter-spacing: -1.600px; }
.lead { margin: 49px 0 0; display: flex; flex-direction: column; font-size: 21.500px; line-height: 40px; color: #6b7280; letter-spacing: 0.220px; }
.ctas { display: flex; gap: 63px; margin-top: 56px; }
.cta { height: 88px; border-radius: 12px; display: flex; align-items: center; font-size: 20px; font-weight: 600; }
.start { width: 328px; padding-left: 63px; background: #ffa500; letter-spacing: 0.150px; }
.start span { width: 182px; }
.start svg { width: 18px; height: 17px; }
.works { width: 302px; padding-left: 62px; background: #000; color: #d9d9d9; }
.works span { width: 140px; }
.works svg { width: 38px; height: 38px; }
.chips { display: flex; gap: 15px; margin-top: 35px; }
.chip { height: 61px; border-radius: 9px; background: #e4e7ff; display: flex; align-items: center; padding-left: 15px; font-size: 16.300px; font-weight: 600; letter-spacing: 1.500px; color: #25262e; }
.chip span { margin-top: -2px; }
.c1 { width: 186px; } .c2 { width: 190px; } .c3 { width: 184px; }
.c1 svg { width: 26px; height: 26px; margin-right: 18px; }
.c2 svg { width: 32px; height: 26px; margin-right: 18px; }
.c3 svg { width: 32px; height: 24px; margin-right: 18px; }
.more { width: 46px; height: 55px; border-radius: 9px; background: #ffecd6; display: flex; align-items: center; justify-content: center; }
.more svg { width: 14px; height: 22px; }
.legal { margin: 53px 0 0 16px; font-size: 14.500px; line-height: 22px; white-space: nowrap; letter-spacing: 0.070px; }
.totop { position: absolute; left: 1760px; top: 856.500px; width: 63px; height: 62px; border-radius: 10px; background: #5956e9; box-shadow: 0 0 100px 20px rgba(89, 86, 233, .36); display: flex; align-items: center; justify-content: center; padding-right: 1px; }
.totop svg { width: 16px; height: 18px; }

.sidebar { flex: 1; display: flex; flex-direction: column; align-items: center; padding-top: 13px; }
.sidebar svg { width: 18px; height: 18px; margin-bottom: 22.100px; }
.sidebar hr { width: 28px; height: 1px; border: 0; margin: 0 0 25px; background: #666; flex: none; }
.sidebar svg.add { width: 14px; height: 14px; margin: 0; }
.grow { flex: 1; }
.sidebar hr.low { margin: 0 0 13px; }
.sidebar svg.gear { margin-bottom: 9px; }

.taskbar { height: 48px; flex: none; display: flex; background: linear-gradient(90deg, #000, #0b0714 30%, #09060f 65%, #000 92%); padding-left: 608.500px; }
.apps { display: flex; }
.app { position: relative; width: 44px; height: 48px; display: flex; align-items: center; justify-content: center; }
.app svg { width: 24px; height: 24px; z-index: 1; }
.app.lit::before { content: ""; position: absolute; left: 2px; top: 4px; width: 40px; height: 40px; border-radius: 4px; background: #1d1b26; }
.mark { position: absolute; left: 19px; top: 40px; width: 6px; height: 3px; border-radius: 2px; background: #92909a; }
.mark.wide { left: 14px; width: 16px; background: #4cc2ff; }
.tray { margin-left: auto; display: flex; align-items: center; font-size: 12px; }
.chev { width: 12px; height: 8px; margin-right: 9px; }
.sync { width: 17px; height: 17px; margin-right: 9px; }
.batt { width: 16px; height: 14px; margin-right: 9px; }
.wifi { width: 14px; height: 14px; margin-right: 8px; }
.vol { width: 17px; height: 14px; margin-right: 9px; }
.lang { width: 24px; letter-spacing: -0.4px; }
.clock { width: 84px; display: flex; flex-direction: column; align-items: center; line-height: 16px; letter-spacing: -0.300px; }
.note { width: 25px; height: 25px; margin-left: 7px; margin-right: 11px; }
.peek { width: 1px; height: 48px; background: #777; margin-right: 4px; }
</style>
